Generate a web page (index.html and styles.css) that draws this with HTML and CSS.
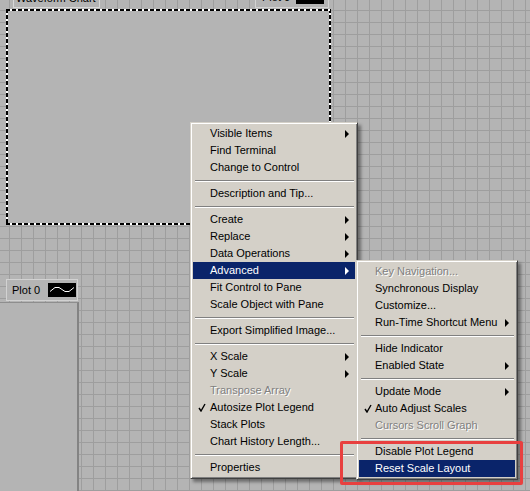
FILE: index.html
```html
<!DOCTYPE html>
<html>
<head>
<meta charset="utf-8">
<link rel="stylesheet" href="styles.css">
</head>
<body>
<div class="canvas">
  <div class="label-top">Waveform Chart</div>
  <div class="legend legend-top"><span class="plot-name">Plot 0</span><span class="swatch-box"></span></div>
  <div class="chart"></div>

  <div class="legend legend-left">
    <span class="plot-name">Plot 0</span>
    <svg class="swatch" width="28" height="14" viewBox="0 0 28 14"><rect width="28" height="14" fill="#000"/><polyline points="2,8.5 7,4.5 11,4.5 17,8.5 21,8.5 26,4.5" fill="none" stroke="#fff" stroke-width="1"/></svg>
  </div>
  <div class="side-pane"></div>

  <div class="menu menu-main">
    <div class="item"><span class="gut"></span><span class="txt">Visible Items</span><span class="arrow"></span></div>
    <div class="item"><span class="gut"></span><span class="txt">Find Terminal</span></div>
    <div class="item"><span class="gut"></span><span class="txt">Change to Control</span></div>
    <div class="sep"></div>
    <div class="item"><span class="gut"></span><span class="txt">Description and Tip...</span></div>
    <div class="sep"></div>
    <div class="item"><span class="gut"></span><span class="txt">Create</span><span class="arrow"></span></div>
    <div class="item"><span class="gut"></span><span class="txt">Replace</span><span class="arrow"></span></div>
    <div class="item"><span class="gut"></span><span class="txt">Data Operations</span><span class="arrow"></span></div>
    <div class="item active"><span class="gut"></span><span class="txt">Advanced</span><span class="arrow"></span></div>
    <div class="item"><span class="gut"></span><span class="txt">Fit Control to Pane</span></div>
    <div class="item"><span class="gut"></span><span class="txt">Scale Object with Pane</span></div>
    <div class="sep"></div>
    <div class="item"><span class="gut"></span><span class="txt">Export Simplified Image...</span></div>
    <div class="sep"></div>
    <div class="item"><span class="gut"></span><span class="txt">X Scale</span><span class="arrow"></span></div>
    <div class="item"><span class="gut"></span><span class="txt">Y Scale</span><span class="arrow"></span></div>
    <div class="item disabled"><span class="gut"></span><span class="txt">Transpose Array</span></div>
    <div class="item"><span class="gut"><svg class="check" width="8" height="9" viewBox="0 0 8 9"><path d="M1 5 L3 8 L7 1" fill="none" stroke="#000" stroke-width="1.4"/></svg></span><span class="txt">Autosize Plot Legend</span></div>
    <div class="item"><span class="gut"></span><span class="txt">Stack Plots</span></div>
    <div class="item"><span class="gut"></span><span class="txt">Chart History Length...</span></div>
    <div class="sep"></div>
    <div class="item"><span class="gut"></span><span class="txt">Properties</span></div>
  </div>

  <div class="menu menu-sub">
    <div class="item disabled"><span class="gut"></span><span class="txt">Key Navigation...</span></div>
    <div class="item"><span class="gut"></span><span class="txt">Synchronous Display</span></div>
    <div class="item"><span class="gut"></span><span class="txt">Customize...</span></div>
    <div class="item"><span class="gut"></span><span class="txt">Run-Time Shortcut Menu</span><span class="arrow"></span></div>
    <div class="sep"></div>
    <div class="item"><span class="gut"></span><span class="txt">Hide Indicator</span></div>
    <div class="item"><span class="gut"></span><span class="txt">Enabled State</span><span class="arrow"></span></div>
    <div class="sep"></div>
    <div class="item"><span class="gut"></span><span class="txt">Update Mode</span><span class="arrow"></span></div>
    <div class="item"><span class="gut"><svg class="check" width="8" height="9" viewBox="0 0 8 9"><path d="M1 5 L3 8 L7 1" fill="none" stroke="#000" stroke-width="1.4"/></svg></span><span class="txt">Auto Adjust Scales</span></div>
    <div class="item disabled"><span class="gut"></span><span class="txt">Cursors Scroll Graph</span></div>
    <div class="sep"></div>
    <div class="item"><span class="gut"></span><span class="txt">Disable Plot Legend</span></div>
    <div class="item active"><span class="gut"></span><span class="txt">Reset Scale Layout</span></div>
  </div>

  <div class="callout"></div>
</div>
</body>
</html>
```

FILE: styles.css
```css
html, body {
  margin: 0;
  padding: 0;
}
body {
  width: 530px;
  height: 491px;
  overflow: hidden;
  font-family: "Liberation Sans", Arial, sans-serif;
  font-size: 11px;
  color: #000;
}
.canvas {
  position: relative;
  width: 530px;
  height: 491px;
  overflow: hidden;
  background-color: #b4b4b4;
  background-image:
    linear-gradient(90deg, #9e9e9e 1px, transparent 1px),
    linear-gradient(180deg, #9e9e9e 1px, transparent 1px);
  background-size: 12px 12px;
  background-position: 9px 10px;
}

/* front panel objects (free canvas) */
.label-top {
  position: absolute;
  left: 13px;
  top: -9px;
  width: 83px;
  height: 15px;
  border: 1px solid #d8d8d8;
  background: #b4b4b4;
  padding-left: 2px;
  line-height: 13px;
  box-sizing: content-box;
}
.legend {
  position: absolute;
  display: flex;
  align-items: center;
  box-sizing: border-box;
  height: 22px;
  border: 1px solid #d2d2d2;
  background: #b4b4b4;
}
.legend-top {
  left: 255px;
  top: -14px;
  width: 74px;
  padding-left: 6px;
}
.legend-top .swatch-box {
  width: 28px;
  height: 14px;
  background: #000;
  margin-left: 6px;
}
.legend-left {
  left: 6px;
  top: 279px;
  width: 72px;
  padding-left: 5px;
}
.legend-left .swatch {
  display: block;
  margin-left: 8px;
}
.chart {
  position: absolute;
  left: 6px;
  top: 9px;
  width: 325px;
  height: 216px;
  box-sizing: border-box;
  background-color: #b4b4b4;
  background-image:
    repeating-linear-gradient(90deg, #000 0 4px, #fff 4px 6px),
    repeating-linear-gradient(90deg, #000 0 4px, #fff 4px 6px),
    repeating-linear-gradient(180deg, #000 0 4px, #fff 4px 6px),
    repeating-linear-gradient(180deg, #000 0 4px, #fff 4px 6px);
  background-size: 100% 2px, 100% 2px, 2px 100%, 2px 100%;
  background-position: 0 0, 0 100%, 0 0, 100% 0;
  background-repeat: no-repeat;
}
.side-pane {
  position: absolute;
  left: 0;
  top: 302px;
  width: 79px;
  height: 189px;
  box-sizing: border-box;
  background: #b4b4b4;
  border-top: 1px solid #8e8e8e;
  border-right: 2px solid #838383;
}

/* context menus (overlays) */
.menu {
  position: absolute;
  box-sizing: border-box;
  background: #d4d0c8;
  border: 1px solid;
  border-color: #d4d0c8 #404040 #404040 #d4d0c8;
  padding: 2px;
  box-shadow:
    inset 1px 1px 0 #fff,
    inset -1px -1px 0 #808080,
    3px 3px 3px rgba(0, 0, 0, 0.4);
}
.menu-main {
  left: 190px;
  top: 122px;
  width: 168px;
}
.menu-sub {
  left: 356px;
  top: 260px;
  width: 162px;
}
.item {
  display: flex;
  align-items: center;
  height: 17px;
  padding-right: 6px;
  white-space: nowrap;
}
.menu-main .gut {
  width: 17px;
}
.menu-sub .gut {
  width: 16px;
}
.gut {
  flex: none;
  display: flex;
  align-items: center;
  height: 17px;
}
.check {
  display: block;
  margin-left: 5px;
}
.txt {
  flex: 1;
  padding-bottom: 2px;
}
.arrow {
  flex: none;
  width: 0;
  height: 0;
  border-left: 4px solid #000;
  border-top: 4px solid transparent;
  border-bottom: 4px solid transparent;
}
.item.active {
  background: #0a246a;
  color: #fff;
}
.item.active .arrow {
  border-left-color: #fff;
}
.item.disabled {
  color: #808080;
  text-shadow: 1px 1px 0 #fff;
}
.sep {
  height: 9px;
  display: flex;
  align-items: center;
  padding: 0 1px 0 2px;
}
.sep::before {
  content: "";
  flex: 1;
  height: 0;
  border-top: 1px solid #808080;
  border-bottom: 1px solid #fff;
}

/* annotation */
.callout {
  position: absolute;
  left: 340px;
  top: 441px;
  width: 183px;
  height: 44px;
  box-sizing: border-box;
  border: 3px solid #e8403f;
  border-radius: 2px;
}
```
